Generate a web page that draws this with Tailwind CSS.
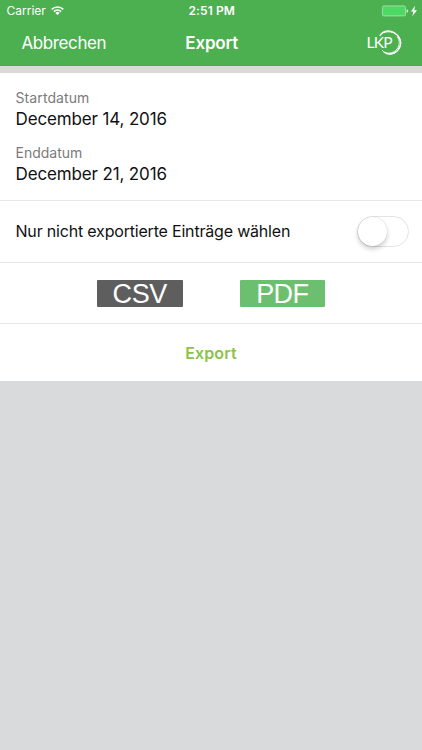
<!DOCTYPE html>
<html lang="de">
<head>
<meta charset="utf-8">
<title>Export</title>
<script src="https://cdn.jsdelivr.net/npm/@tailwindcss/browser@4"></script>
</head>
<body class="flex h-[750px] w-[422px] flex-col overflow-hidden bg-[#d9dadc] font-['Inter','Liberation_Sans',sans-serif] whitespace-nowrap">
  <header class="h-[65.5px] shrink-0 bg-[#4caf50] text-white">
    <div class="grid h-[22px] grid-cols-3 items-center pl-[6.5px] pr-[5px] text-[12px] leading-[22px]">
      <div class="flex items-center gap-[5px]">
        <span>Carrier</span>
        <svg class="mb-[2px] h-[9px] w-[13px]" viewBox="0 0 13 9" fill="none" stroke="#fff" stroke-width="1.6"><path d="M.7 3.4a8.3 8.3 0 0 1 11.6 0M2.9 5.6a5.2 5.2 0 0 1 7.2 0"/><path d="M6.5 9 4.4 6.9a3 3 0 0 1 4.2 0z" fill="#fff" stroke="none"/></svg>
      </div>
      <div class="text-center font-semibold tracking-[0.1px]">2:51 PM</div>
      <svg class="mb-[1px] h-[12px] w-[36px] justify-self-end" viewBox="0 0 36 12"><rect x="1.4" y=".9" width="23.2" height="10" rx="1.5" fill="#4cd964" stroke="#b5e3b7" stroke-width=".8"/><path d="M25.6 4.2c2.2.4 2.2 3.2 0 3.6z" fill="#d5efd6"/><path d="M34 .8 30 6.6h2.3L31.3 11.2 36 5.2h-2.7z" fill="#fff"/></svg>
    </div>
    <div class="grid h-[43px] grid-cols-3 items-center pl-[21.5px] pr-[20px] text-[17px]">
      <span class="tracking-[-0.4px]">Abbrechen</span>
      <span class="text-center font-semibold tracking-[-0.2px]">Export</span>
      <svg class="mb-[1px] h-[28px] w-[36px] justify-self-end" viewBox="0 0 36 28" fill="none" stroke="#fff" stroke-linecap="round" stroke-linejoin="round">
        <path d="M14 6.5C17 1.8 23 .8 28 3.5s8 8.5 6 14-8 9-14 7" stroke-width="1.3"/>
        <path d="M16 4.3C21 1.5 28 2.5 32 7s3.5 12.5-2 16-11 1.5-13.5-1.5" stroke-width="1"/>
        <path d="M18 23.5c5 1.5 10 .5 13-3.5s3-8.5.5-12" stroke-width=".9"/>
        <text x="0.5" y="18.5" fill="#fff" stroke="none" font-family="Lato, sans-serif" font-size="15.5" textLength="26" lengthAdjust="spacing">LKP</text>
      </svg>
    </div>
  </header>
  <main class="mt-[7.5px] h-[308px] shrink-0 bg-white text-[16px] text-[#111]">
    <section class="flex h-[128px] flex-col gap-[13px] border-b border-[#e7e7e7] pl-[15.5px] pt-[15px]">
      <div>
        <div class="text-[14px] leading-[20px] tracking-[0.1px] text-[#7b7b7b]">Startdatum</div>
        <div class="text-[17px] leading-[22px] tracking-[-0.14px]">December 14, 2016</div>
      </div>
      <div>
        <div class="text-[14px] leading-[20px] text-[#7b7b7b]">Enddatum</div>
        <div class="text-[17px] leading-[22px] tracking-[-0.14px]">December 21, 2016</div>
      </div>
    </section>
    <section class="flex h-[62px] items-center justify-between border-b border-[#e7e7e7] pl-[15.5px] pr-[13.5px]">
      <span class="mb-px tracking-[-0.19px]">Nur nicht exportierte Einträge wählen</span>
      <div class="h-[31px] w-[51.5px] rounded-full border-[1.5px] border-[#e3e3e3] bg-white">
        <div class="size-[29px] rounded-full bg-white shadow-[0_3px_5px_rgba(0,0,0,0.2),0_0_1px_rgba(0,0,0,0.2)]"></div>
      </div>
    </section>
    <section class="flex h-[61px] items-center justify-center gap-[57px] border-b border-[#e7e7e7] font-['Liberation_Sans',sans-serif] text-[27px] leading-[27px] text-white">
      <div class="flex h-[27px] w-[85.5px] items-center justify-center rounded-[1px] bg-[#5e5e5e] pt-[2px] tracking-[-0.4px]">CSV</div>
      <div class="flex h-[27px] w-[85.5px] items-center justify-center rounded-[1px] bg-[#6dbf70] pt-[2px] tracking-[-0.6px]">PDF</div>
    </section>
    <div class="flex h-[57px] items-center justify-center font-semibold tracking-[0.1px] text-[#8bc34a]">Export</div>
  </main>
</body>
</html>
